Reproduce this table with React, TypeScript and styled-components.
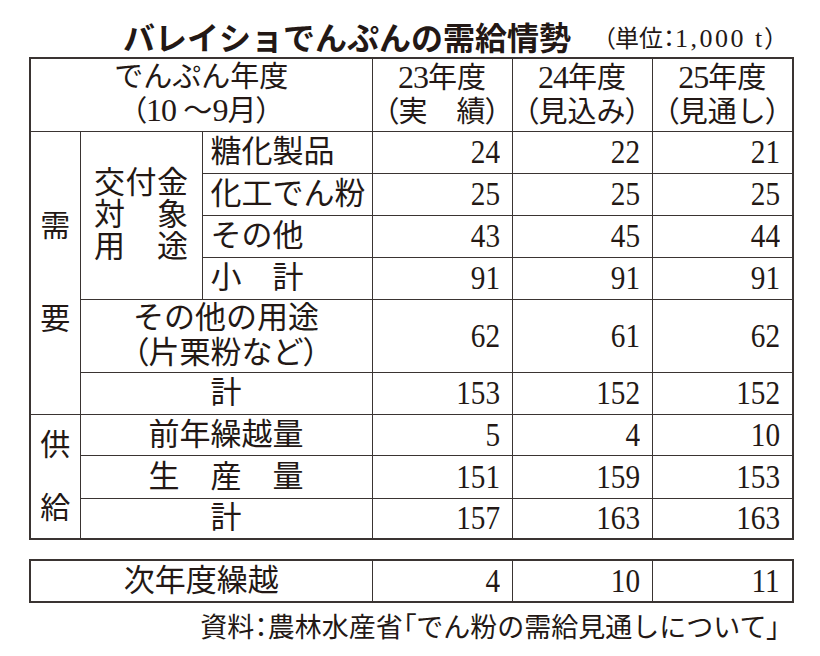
import React from "react";
import styled, { createGlobalStyle } from "styled-components";

const INK = "#231815";
const LINE = "#3a3432";

const GlobalStyle = createGlobalStyle`
  html, body { margin: 0; padding: 0; background: #fff; }
  body {
    font-family: "Liberation Serif", "Noto Sans CJK JP", serif;
    color: ${INK};
  }
`;

const Page = styled.div`
  width: 820px;
  height: 656px;
  padding: 0 28px 0 29px;
  box-sizing: border-box;
`;

const TitleBar = styled.div`
  display: flex;
  align-items: flex-end;
  height: 57px;
  padding: 0 0 5px 94px;
  box-sizing: border-box;
`;

const Title = styled.h1`
  margin: 0;
  font-family: "Noto Sans CJK JP", sans-serif;
  font-weight: 700;
  font-size: 32px;
  line-height: 1;
  white-space: nowrap;
`;

const Unit = styled.span`
  margin-left: 32px;
  font-size: 24px;
  line-height: 1;
  white-space: nowrap;
`;

const UnitNum = styled.span`
  font-size: 26px;
  letter-spacing: 2.5px;
`;

const Punct = styled.span`
  font-family: "Noto Sans CJK JP", sans-serif;
  font-feature-settings: "palt";
`;

const Table = styled.table`
  border-collapse: collapse;
  table-layout: fixed;
  width: 763px;
  border: 2px solid ${LINE};
`;

const Row = styled.tr<{ $h: number }>`
  height: ${(p) => p.$h}px;
`;

const Cell = styled.td<{ $align?: "left" | "center" }>`
  border: 1px solid ${LINE};
  padding: 0 0 0 ${(p) => (p.$align === "left" ? "8px" : "0")};
  font-size: 31px;
  line-height: 32px;
  text-align: ${(p) => p.$align ?? "center"};
  vertical-align: middle;
  white-space: nowrap;
`;

const HeadCell = styled(Cell)`
  font-size: 29px;
  line-height: 31px;
`;

const HeadNum = styled.span`
  font-size: 32px;
  letter-spacing: -1px;
`;

const NumCell = styled.td`
  border: 1px solid ${LINE};
  padding: 0 12px 0 0;
  text-align: right;
  vertical-align: middle;
`;

const Num = styled.span`
  display: inline-block;
  font-family: "Liberation Serif", serif;
  font-size: 34px;
  line-height: 1;
  transform: scaleX(0.86);
  transform-origin: right center;
`;

const SideStack = styled.div<{ $gap: number }>`
  display: flex;
  flex-direction: column;
  align-items: center;
  gap: ${(p) => p.$gap}px;
  font-size: 30px;
  line-height: 32px;
`;

const JustBlock = styled.div`
  width: 94px;
  margin: 0 auto;
  display: flex;
  flex-direction: column;
`;

const JustLine = styled.div`
  display: flex;
  justify-content: space-between;
  font-size: 31px;
  line-height: 32px;
`;

const BottomTable = styled(Table)`
  margin-top: 19px;
`;

const Source = styled.div`
  margin-top: 7px;
  padding-right: 12px;
  text-align: right;
  font-size: 27px;
  line-height: 32px;
  white-space: nowrap;
`;

const Cols = () => (
  <colgroup>
    <col style={{ width: 50 }} />
    <col style={{ width: 122 }} />
    <col style={{ width: 170 }} />
    <col style={{ width: 140 }} />
    <col style={{ width: 140 }} />
    <col style={{ width: 141 }} />
  </colgroup>
);

const Nums = ({ v }: { v: number[] }) => (
  <>
    {v.map((n, i) => (
      <NumCell key={i}>
        <Num>{n}</Num>
      </NumCell>
    ))}
  </>
);

const Just = ({ text }: { text: string }) => (
  <JustLine>
    {Array.from(text).map((c, i) => (
      <span key={i}>{c}</span>
    ))}
  </JustLine>
);

export default function App() {
  return (
    <>
      <GlobalStyle />
      <Page>
        <TitleBar>
          <Title>バレイショでんぷんの需給情勢</Title>
          <Unit>
            <Punct>（</Punct>単位<Punct>：</Punct>
            <UnitNum>1,000 t</UnitNum>
            <Punct>）</Punct>
          </Unit>
        </TitleBar>
        <Table>
          <Cols />
          <tbody>
            <Row $h={73}>
              <HeadCell colSpan={3}>
                でんぷん年度
                <br />
                <Punct>（</Punct>
                <HeadNum>10</HeadNum> ～<HeadNum>9</HeadNum>月<Punct>）</Punct>
              </HeadCell>
              <HeadCell>
                <HeadNum>23</HeadNum>年度
                <br />
                <Punct>（</Punct>実　績<Punct>）</Punct>
              </HeadCell>
              <HeadCell>
                <HeadNum>24</HeadNum>年度
                <br />
                <Punct>（</Punct>見込み<Punct>）</Punct>
              </HeadCell>
              <HeadCell>
                <HeadNum>25</HeadNum>年度
                <br />
                <Punct>（</Punct>見通し<Punct>）</Punct>
              </HeadCell>
            </Row>
            <Row $h={42}>
              <Cell rowSpan={6}>
                <SideStack $gap={61}>
                  <span>需</span>
                  <span>要</span>
                </SideStack>
              </Cell>
              <Cell rowSpan={4}>
                <JustBlock>
                  <Just text="交付金" />
                  <Just text="対象" />
                  <Just text="用途" />
                </JustBlock>
              </Cell>
              <Cell $align="left">糖化製品</Cell>
              <Nums v={[24, 22, 21]} />
            </Row>
            <Row $h={42}>
              <Cell $align="left">化工でん粉</Cell>
              <Nums v={[25, 25, 25]} />
            </Row>
            <Row $h={42}>
              <Cell $align="left">その他</Cell>
              <Nums v={[43, 45, 44]} />
            </Row>
            <Row $h={42}>
              <Cell $align="left">小　計</Cell>
              <Nums v={[91, 91, 91]} />
            </Row>
            <Row $h={73}>
              <Cell colSpan={2}>
                その他の用途
                <br />
                <Punct>（</Punct>片栗粉など<Punct>）</Punct>
              </Cell>
              <Nums v={[62, 61, 62]} />
            </Row>
            <Row $h={42}>
              <Cell colSpan={2}>計</Cell>
              <Nums v={[153, 152, 152]} />
            </Row>
            <Row $h={41}>
              <Cell rowSpan={3}>
                <SideStack $gap={31}>
                  <span>供</span>
                  <span>給</span>
                </SideStack>
              </Cell>
              <Cell colSpan={2}>前年繰越量</Cell>
              <Nums v={[5, 4, 10]} />
            </Row>
            <Row $h={43}>
              <Cell colSpan={2}>生　産　量</Cell>
              <Nums v={[151, 159, 153]} />
            </Row>
            <Row $h={41}>
              <Cell colSpan={2}>計</Cell>
              <Nums v={[157, 163, 163]} />
            </Row>
          </tbody>
        </Table>
        <BottomTable>
          <Cols />
          <tbody>
            <Row $h={42}>
              <Cell colSpan={3}>次年度繰越</Cell>
              <Nums v={[4, 10, 11]} />
            </Row>
          </tbody>
        </BottomTable>
        <Source>
          資料<Punct>：</Punct>農林水産省<Punct>「</Punct>でん粉の需給見通しについて<Punct>」</Punct>
        </Source>
      </Page>
    </>
  );
}
